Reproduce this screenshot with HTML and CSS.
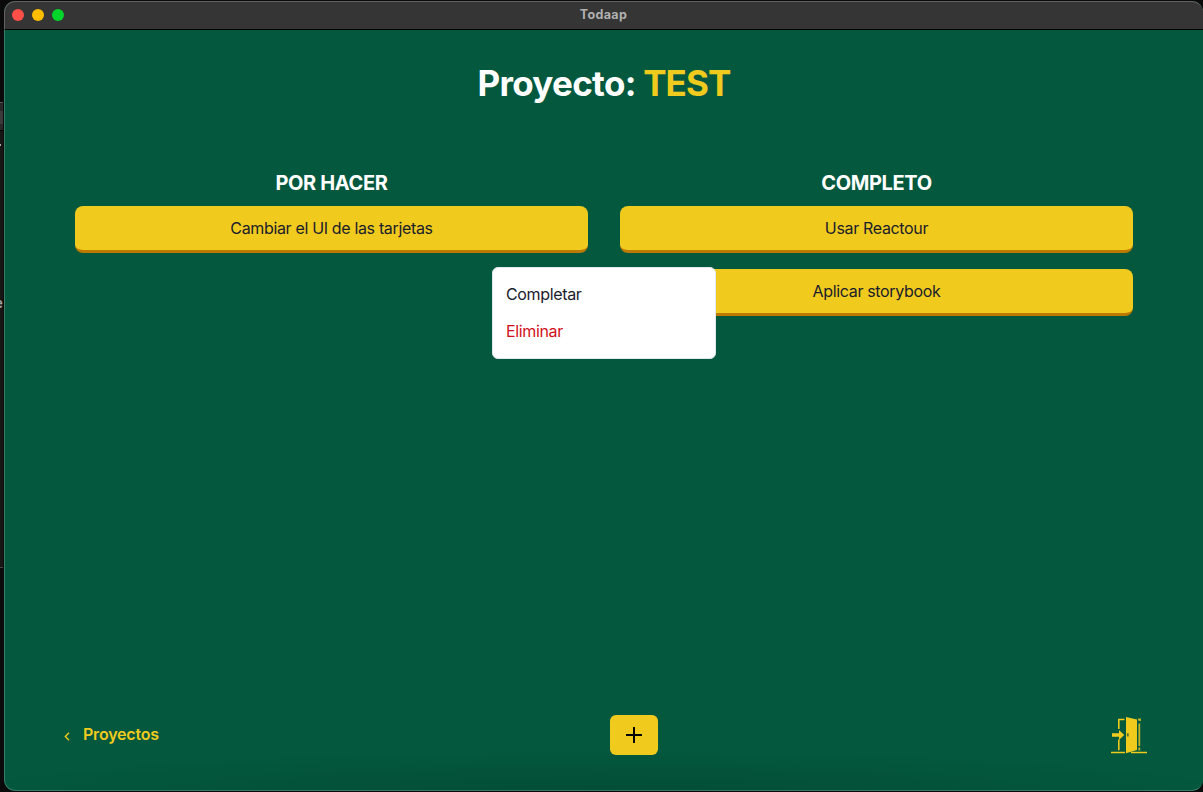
FILE: index.html
```html
<!DOCTYPE html>
<html lang="es">
<head>
<meta charset="utf-8">
<title>Todaap</title>
<link rel="stylesheet" href="styles.css">
</head>
<body>
<div class="backdrop">
  <span class="behind-panel"></span>
  <span class="behind-dash"></span>
  <span class="behind-letter">e</span>
</div>
<div class="window">
  <header class="titlebar">
    <div class="lights"><i class="light red"></i><i class="light amber"></i><i class="light green"></i></div>
    <span class="app-name">Todaap</span>
  </header>
  <main class="content">
    <h1 class="heading"><span class="heading-label">Proyecto:</span> <span class="project">TEST</span></h1>
    <div class="board">
      <section class="column">
        <h2 class="column-title todo">POR HACER</h2>
        <button class="card"><span class="card-a">Cambiar el UI de las tarjetas</span></button>
      </section>
      <section class="column">
        <h2 class="column-title done">COMPLETO</h2>
        <button class="card"><span class="card-b">Usar Reactour</span></button>
        <button class="card"><span class="card-c">Aplicar storybook</span></button>
      </section>
    </div>
    <footer class="footer">
      <a class="back"><svg width="6" height="9" viewBox="0 0 6 9"><path d="M5 .8 1.300 4.500 5 8.200" fill="none" stroke="currentColor" stroke-width="1.400"/></svg><span class="back-text">Proyectos</span></a>
      <button class="add"><svg width="16" height="16" viewBox="0 0 16 16"><path d="M8 0v16M0 8h16" stroke="#000" stroke-width="2"/></svg></button>
      <svg class="exit" width="36" height="38" viewBox="0 0 36 38" fill="none" stroke="currentColor">
        <path d="M13.500 3.500H7.800V13M7.800 23.500v10.800" stroke-width="1.600"/>
        <path d="M0 36.500h14M20 36.500h16" stroke-width="1.700"/>
        <path d="M15 1 26 3.600V34L15 37.300Z" fill="currentColor" stroke="none"/>
        <path d="M1 17.300H8V14l5.300 5L8 24v-3.300H1Z" fill="currentColor" stroke="none"/>
        <path d="M16.800 17.200v3.300" stroke="#4f6f30" stroke-width="1.800"/>
        <path d="M27 3.500H29V5M28.300 7.500V30M28.300 31.500V34.500" stroke-width="1.800" opacity=".8"/>
      </svg>
    </footer>
  </main>
  <div class="menu">
    <a class="menu-item"><span class="complete">Completar</span></a>
    <a class="menu-item danger"><span class="delete">Eliminar</span></a>
  </div>
</div>
</body>
</html>
```
FILE: styles.css
```css
* { box-sizing: border-box; }
body {
  margin: 0; padding: 1px 0 1px 4px; height: 792px; overflow: hidden;
  background: #0a0a0a; color: #1a202c;
  font: 16px/24px Inter, "Liberation Sans", sans-serif;
}
.backdrop { position: absolute; left: 0; top: 0; width: 3px; height: 568px; overflow: hidden; border-bottom: 1px solid #454545; background: linear-gradient(#0a0a0a 102px, #171615 102px); }
.behind-panel { position: absolute; top: 102px; width: 3px; height: 29px; background: linear-gradient(#282828 8px, #3b3b3b 8px 21px, #282828 21px); border-top: 1px solid #555; border-bottom: 1px solid #000; }
.behind-dash { position: absolute; top: 144px; width: 1px; height: 2px; background: #aaa; }
.behind-letter { position: absolute; left: -5px; top: 291px; font-size: 13px; font-weight: 600; color: #aaa; }
.window { position: relative; height: 790px; border-radius: 11px; overflow: hidden; display: flex; flex-direction: column; background: #03583d; }
.window::after { content: ""; position: absolute; inset: 0; border: 1px solid rgba(255,255,255,.22); border-right: 0; border-radius: 11px; pointer-events: none; }
.titlebar { height: 29px; flex: none; display: grid; grid-template-columns: 1fr auto 1fr; align-items: center; padding: 0 8px; background: #353535; border-bottom: 1px solid #000; }
.lights { display: flex; gap: 8px; }
.light { width: 12px; height: 12px; border-radius: 50%; }
.red { background: #ff4f49; }
.amber { background: #ffbd00; }
.green { background: #00d52b; }
.app-name { margin-top: -1px; font-size: 12.5px; line-height: 16px; font-weight: 700; color: #b1b1b1; letter-spacing: .35px; }
.content { flex: 1; display: flex; flex-direction: column; padding: 32px 56px 36px 60px; background: radial-gradient(ellipse 640px 40px at 50% 100%, rgba(0,35,28,.2), transparent); }
.heading { margin: 0; padding-right: 3px; text-align: center; font-size: 35px; line-height: 43px; font-weight: 700; letter-spacing: -.8px; color: #fff; }
.heading-label { letter-spacing: -.7px; }
.project { color: #f0cb1e; letter-spacing: -.9px; }
.board { display: grid; grid-template-columns: 1fr 1fr; gap: 32px; padding: 66px 14px 0 11px; flex: 1; align-items: start; }
.column { display: flex; flex-direction: column; gap: 16px; }
.column-title { margin: 0 0 -5px; text-align: center; font-size: 20px; line-height: 24px; font-weight: 700; letter-spacing: -.35px; color: #fff; }
.card { height: 47px; padding: 0; border: 0; border-bottom: 3px solid #bd7a00; border-radius: 8px; background: #f0cb1e; color: #1a202c; font: inherit; letter-spacing: -.34px; }
.footer { display: flex; height: 40px; align-items: center; justify-content: space-between; color: #f0cb1e; }
.back { display: flex; width: 92px; gap: 13px; align-items: center; white-space: nowrap; font-weight: 600; letter-spacing: -.2px; }
.back svg { flex: none; position: relative; top: 1px; }
.back-text { margin-top: -2px; }
.add { display: grid; place-items: center; width: 48px; height: 40px; padding: 0; border: 0; border-radius: 6px; background: #f0cb1e; }
.menu { position: absolute; left: 488px; top: 266px; width: 224px; height: 92px; padding: 8px 0; background: #fff; border: 1px solid #e2e8f0; border-radius: 6px; letter-spacing: -.35px; }
.menu-item { display: block; height: 37px; padding: 6px 13px; }
.danger { color: #d0111b; }
```
